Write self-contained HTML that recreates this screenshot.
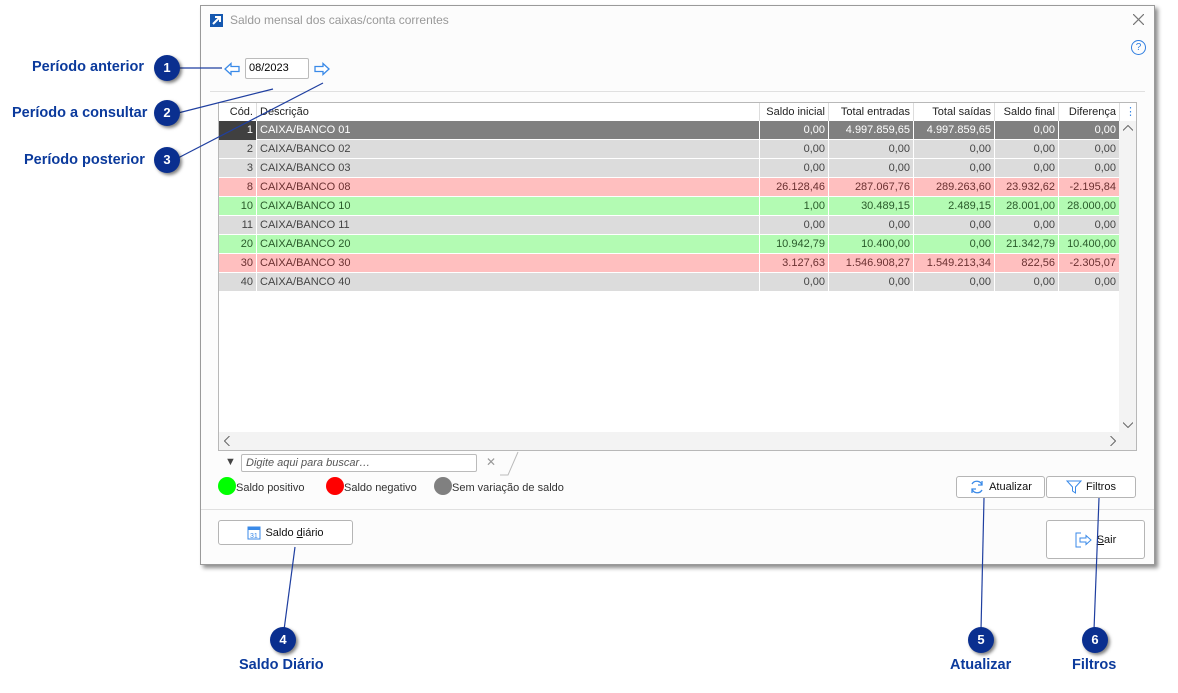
<!DOCTYPE html>
<html><head><meta charset="utf-8"><style>
*{box-sizing:border-box;margin:0;padding:0}
body{width:1178px;height:693px;background:#fff;position:relative;font-family:"Liberation Sans",sans-serif;overflow:hidden}
.a{position:absolute}
.win{left:200px;top:5px;width:955px;height:560px;background:#fcfcfc;border:1px solid #9a9a9a;box-shadow:3px 3px 4px rgba(0,0,0,.45)}
.lbl{position:absolute;color:#0b3a9c;font-weight:bold;font-size:14.5px;white-space:nowrap}
.num{position:absolute;width:26px;height:26px;border-radius:50%;background:#0a2f8f;color:#fff;font-weight:bold;font-size:13px;text-align:center;line-height:26px;box-shadow:2px 2px 3px rgba(0,0,0,.5)}
.grid{left:218px;top:102px;width:919px;height:349px;border:1px solid #b8b8b8;background:#fff}
.row{position:absolute;left:0;height:19px;font-size:11px;color:#444}
.c{position:absolute;top:0;height:19px;line-height:19px;border-right:1px solid #fff;padding:0 3px;text-align:right;white-space:nowrap;overflow:hidden}
.btn{position:absolute;border:1px solid #b5b5b5;border-radius:3px;background:#fff;font-size:11px;color:#111;display:flex;align-items:center;justify-content:center;gap:4px}
</style></head><body>
<div class="a win">
 <div class="a" style="left:9px;top:8px;width:13px;height:13px;background:#1558b0"></div>
 <svg class="a" style="left:9px;top:8px" width="13" height="13"><path d="M3 10L10 3M5 3h5v5" stroke="#fff" stroke-width="2" fill="none"/></svg>
 <div class="a" style="left:29px;top:7px;font-size:12px;color:#999">Saldo mensal dos caixas/conta correntes</div>
 <svg class="a" style="left:932px;top:8px" width="11" height="11"><path d="M0 0L11 11M11 0L0 11" stroke="#777" stroke-width="1.2"/></svg>
 <div class="a" style="left:930px;top:34px;width:15px;height:15px;border:1px solid #2f7ee0;border-radius:50%;color:#2f7ee0;font-size:10px;text-align:center;line-height:13px">?</div>
 <div class="a" style="left:44px;top:52px;width:64px;height:21px;border:1px solid #bbb;border-radius:2px;background:#fff;font-size:11px;line-height:19px;padding-left:3px">08/2023</div>
 <svg class="a" style="left:22px;top:56px" width="18" height="14"><path d="M2 7L8 1.5V4.5H16V9.5H8V12.5Z" fill="#fff" stroke="#3a8ae8" stroke-width="1.3"/></svg>
 <svg class="a" style="left:112px;top:56px" width="18" height="14"><path d="M16 7L10 1.5V4.5H2V9.5H10V12.5Z" fill="#fff" stroke="#3a8ae8" stroke-width="1.3"/></svg>
 <div class="a" style="left:9px;top:85px;width:935px;height:1px;background:#e0e0e0"></div>
 <div class="a" style="left:0;top:503px;width:953px;height:1px;background:#e0e0e0"></div>
</div>
<div class="a grid">
 <div class="row" style="top:0;height:18px;width:900px;background:#fff;color:#222">
  <div class="c" style="left:0;width:38px;border-right:1px solid #ddd">Cód.</div>
  <div class="c" style="left:38px;width:503px;text-align:left;border-right:1px solid #ddd">Descrição</div>
  <div class="c" style="left:541px;width:69px;border-right:1px solid #ddd">Saldo inicial</div>
  <div class="c" style="left:610px;width:85px;border-right:1px solid #ddd">Total entradas</div>
  <div class="c" style="left:695px;width:81px;border-right:1px solid #ddd">Total saídas</div>
  <div class="c" style="left:776px;width:64px;border-right:1px solid #ddd">Saldo final</div>
  <div class="c" style="left:840px;width:61px;border-right:1px solid #ddd">Diferença</div>
 </div>
 <div class="a" style="left:906px;top:2px;color:#3a8ae8;font-size:11px">⋮</div>
 <div class="a" style="left:0;top:18px;width:917px;height:1px;background:#ddd"></div>
 <div id="rows"></div>
 <div class="a" style="left:900px;top:18px;width:17px;height:311px;background:#f3f3f3"></div>
 <svg class="a" style="left:904px;top:22px" width="10" height="6"><path d="M0 5.5L5 0.5L10 5.5" stroke="#666" fill="none"/></svg>
 <svg class="a" style="left:904px;top:319px" width="10" height="6"><path d="M0 0.5L5 5.5L10 0.5" stroke="#666" fill="none"/></svg>
 <div class="a" style="left:0;top:329px;width:917px;height:18px;background:#f3f3f3"></div>
 <svg class="a" style="left:5px;top:333px" width="6" height="10"><path d="M5.5 0L0.5 5L5.5 10" stroke="#666" fill="none"/></svg>
 <svg class="a" style="left:891px;top:333px" width="6" height="10"><path d="M0.5 0L5.5 5L0.5 10" stroke="#666" fill="none"/></svg>
</div>
<div class="a" style="left:225px;top:456px;font-size:11px;color:#444">▼</div>
<div class="a" style="left:241px;top:454px;width:236px;height:18px;border:1px solid #bbb;border-radius:2px;font-size:11px;font-style:italic;color:#555;line-height:16px;padding-left:4px;background:#fff">Digite aqui para buscar…</div>
<div class="a" style="left:486px;top:455px;font-size:12px;color:#999">✕</div>
<svg class="a" style="left:500px;top:450px" width="20" height="26"><path d="M0 25L8 25L18 2" stroke="#bbb" fill="none"/></svg>
<div class="a" style="left:218px;top:477px;width:18px;height:18px;border-radius:50%;background:#0f0"></div>
<div class="a" style="left:236px;top:482px;font-size:11px;color:#333">Saldo positivo</div>
<div class="a" style="left:326px;top:477px;width:18px;height:18px;border-radius:50%;background:#f00"></div>
<div class="a" style="left:344px;top:482px;font-size:11px;color:#333">Saldo negativo</div>
<div class="a" style="left:434px;top:477px;width:18px;height:18px;border-radius:50%;background:#808080"></div>
<div class="a" style="left:452px;top:482px;font-size:11px;color:#333">Sem variação de saldo</div>
<div class="btn" style="left:956px;top:476px;width:89px;height:22px"><svg width="16" height="16"><path d="M13 6A5.5 5.5 0 0 0 3 5M3 10A5.5 5.5 0 0 0 13 11" stroke="#3a8ae8" fill="none" stroke-width="1.3"/><path d="M13 2V6H9M3 14V10H7" stroke="#3a8ae8" fill="none" stroke-width="1.3"/></svg><span>Atualizar</span></div>
<div class="btn" style="left:1046px;top:476px;width:90px;height:22px"><svg width="16" height="14"><path d="M1 1H15L9.5 7V13L6.5 11V7Z" fill="none" stroke="#3a8ae8"/></svg><span>Filtros</span></div>
<div class="btn" style="left:218px;top:520px;width:135px;height:25px"><svg width="14" height="15"><rect x="1" y="2" width="12" height="12" fill="none" stroke="#3a8ae8"/><rect x="1" y="2" width="12" height="3" fill="#3a8ae8"/><text x="3" y="13" font-size="7" fill="#3a8ae8" font-family="Liberation Sans">31</text></svg><span>Saldo <u>d</u>iário</span></div>
<div class="btn" style="left:1046px;top:520px;width:99px;height:39px"><svg width="18" height="16"><path d="M6 1H1V15H6" fill="none" stroke="#3a8ae8"/><path d="M16 8L11 3.5V6H5V10H11V12.5Z" fill="none" stroke="#3a8ae8"/></svg><span><u>S</u>air</span></div>
<svg class="a" style="left:0;top:0" width="1178" height="693"><g stroke="#1f3fa0" stroke-width="1.2" fill="none">
<path d="M178 68H222"/><path d="M178 113L273 89"/><path d="M178 158L323 83"/>
<path d="M295 547L284 630"/><path d="M984 498L981 630"/><path d="M1099 498L1094 630"/></g></svg>
<div class="lbl" style="left:32px;top:59px">Período anterior</div><div class="num" style="left:154px;top:55px">1</div>
<div class="lbl" style="left:12px;top:105px">Período a consultar</div><div class="num" style="left:154px;top:100px">2</div>
<div class="lbl" style="left:24px;top:152px">Período posterior</div><div class="num" style="left:154px;top:147px">3</div>
<div class="num" style="left:270px;top:627px">4</div><div class="lbl" style="left:239px;top:657px">Saldo Diário</div>
<div class="num" style="left:968px;top:627px">5</div><div class="lbl" style="left:950px;top:657px">Atualizar</div>
<div class="num" style="left:1082px;top:627px">6</div><div class="lbl" style="left:1072px;top:657px">Filtros</div>
<script>
var d=[["1","CAIXA/BANCO 01","0,00","4.997.859,65","4.997.859,65","0,00","0,00","s"],
["2","CAIXA/BANCO 02","0,00","0,00","0,00","0,00","0,00","g"],
["3","CAIXA/BANCO 03","0,00","0,00","0,00","0,00","0,00","g"],
["8","CAIXA/BANCO 08","26.128,46","287.067,76","289.263,60","23.932,62","-2.195,84","r"],
["10","CAIXA/BANCO 10","1,00","30.489,15","2.489,15","28.001,00","28.000,00","v"],
["11","CAIXA/BANCO 11","0,00","0,00","0,00","0,00","0,00","g"],
["20","CAIXA/BANCO 20","10.942,79","10.400,00","0,00","21.342,79","10.400,00","v"],
["30","CAIXA/BANCO 30","3.127,63","1.546.908,27","1.549.213,34","822,56","-2.305,07","r"],
["40","CAIXA/BANCO 40","0,00","0,00","0,00","0,00","0,00","g"]];
var bg={s:"#808080",g:"#dcdcdc",r:"#ffbfbf",v:"#b3fbb3"},fg={s:"#fff",g:"#444",r:"#6a3030",v:"#2a5a2a"};
var L=[0,38,541,610,695,776,840],W=[38,503,69,85,81,64,61],h="";
d.forEach(function(r,i){h+='<div class="row" style="top:'+(18+i*19)+'px;width:900px;background:'+bg[r[7]]+';color:'+fg[r[7]]+';border-bottom:1px solid #fff">';
for(var j=0;j<7;j++){var st='left:'+L[j]+'px;width:'+W[j]+'px;';if(j==1)st+='text-align:left;';if(j==0&&r[7]=='s')st+='background:#404040;';h+='<div class="c" style="'+st+'">'+r[j]+'</div>';}h+='</div>';});
document.getElementById('rows').innerHTML=h;
</script>
</body></html>
